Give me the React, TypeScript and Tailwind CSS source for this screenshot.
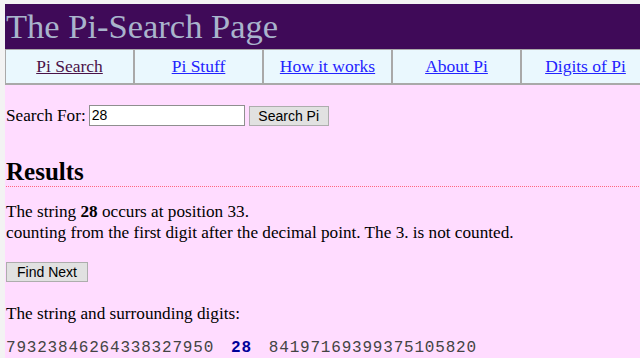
const navItems = [
  { label: 'Pi Search', current: true },
  { label: 'Pi Stuff', current: false },
  { label: 'How it works', current: false },
  { label: 'About Pi', current: false },
  { label: 'Digits of Pi', current: false },
];

export default function App() {
  return (
    <div className="h-[358px] overflow-hidden bg-[#f3f3f3] pl-[5px] pt-[4px] font-['Liberation_Serif',serif] text-[17.2px] text-black">
      <div className="flex h-full w-[660px] flex-col">
        <header className="h-[46px] bg-[#3f0a58] pl-[1px] text-[34.5px] leading-[44px] text-[#a9b4cc]">The Pi-Search Page</header>

        <nav className="flex h-[37px] border-b-2 border-l border-t border-[#a9a9a9] bg-[#eaf8fe] text-[17.5px]">
          {navItems.map((item) => (
            <div key={item.label} className="flex w-[129px] shrink-0 items-center justify-center border-r-2 border-[#a9a9a9]">
              <a href="#" className={item.current ? 'text-[#4a1248] underline' : 'text-[#2323ff] underline'}>
                {item.label}
              </a>
            </div>
          ))}
        </nav>

        <main className="flex-1 bg-[#ffdcff] pl-[1px]">
          <form className="flex items-center pt-[20px]" onSubmit={(e) => e.preventDefault()}>
            <label className="mr-[3px] leading-[21px]">Search For:</label>
            <input
              defaultValue="28"
              className="h-[21px] w-[156px] border border-[#8f8f8f] bg-white px-[2px] font-['Liberation_Sans',sans-serif] text-[14px] outline-none"
            />
            <button
              type="submit"
              className="ml-[4px] h-[20px] w-[80px] border border-[#adadad] bg-[#e1e1e1] font-['Liberation_Sans',sans-serif] text-[14px] leading-[18px]"
            >
              Search Pi
            </button>
          </form>

          <h2 className="mt-[33px] border-b border-dotted border-[#ff6680] pb-[1px] text-[25px] font-bold leading-[26px]">Results</h2>

          <p className="mt-[14px] leading-[21px]">
            The string <b>28</b> occurs at position 33.
            <br />
            counting from the first digit after the decimal point. The 3. is not counted.
          </p>

          <button
            type="button"
            className="mt-[19px] h-[20px] w-[82px] border border-[#adadad] bg-[#e1e1e1] font-['Liberation_Sans',sans-serif] text-[14px] leading-[18px]"
          >
            Find Next
          </button>

          <p className="mt-[18px] leading-[21px]">The string and surrounding digits:</p>

          <div className="mt-[14px] flex font-['Liberation_Mono',monospace] text-[16px] leading-[20px] tracking-[0.8px] text-[#444]">
            <span>79323846264338327950</span>
            <b className="mx-[17px] text-[#000099]">28</b>
            <span>84197169399375105820</span>
          </div>
        </main>
      </div>
    </div>
  );
}
